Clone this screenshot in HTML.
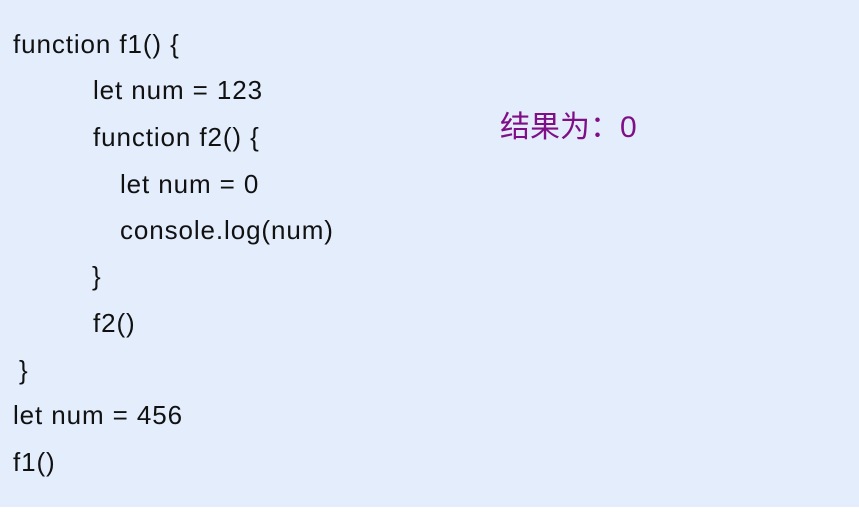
<!DOCTYPE html>
<html><head><meta charset="utf-8"><style>
html,body{margin:0;padding:0;width:859px;height:515px;background:#fff;overflow:hidden}
#bg{position:absolute;left:0;top:0;width:859px;height:507px;background:#e3edfc}
.l{position:absolute;font-family:"Liberation Sans","Noto Sans CJK SC",sans-serif;font-size:26px;letter-spacing:0.9px;color:#111;line-height:30px;white-space:pre}
.r{position:absolute;left:500px;top:111px;font-family:"Liberation Sans","Noto Sans CJK SC",sans-serif;font-size:30px;color:#7f0f86;line-height:34px;white-space:pre}
</style></head><body><div id="bg"></div>
<div class="l" style="left:13px;top:29px">function f1() {</div>
<div class="l" style="left:93px;top:75px">let num = 123</div>
<div class="l" style="left:93px;top:122px">function f2() {</div>
<div class="l" style="left:120px;top:169px">let num = 0</div>
<div class="l" style="left:120px;top:215px">console.log(num)</div>
<div class="l" style="left:92px;top:261px">}</div>
<div class="l" style="left:93px;top:308px">f2()</div>
<div class="l" style="left:19px;top:355px">}</div>
<div class="l" style="left:13px;top:400px">let num = 456</div>
<div class="l" style="left:13px;top:447px">f1()</div>
<div class="r">结果为：0</div>
</body></html>
